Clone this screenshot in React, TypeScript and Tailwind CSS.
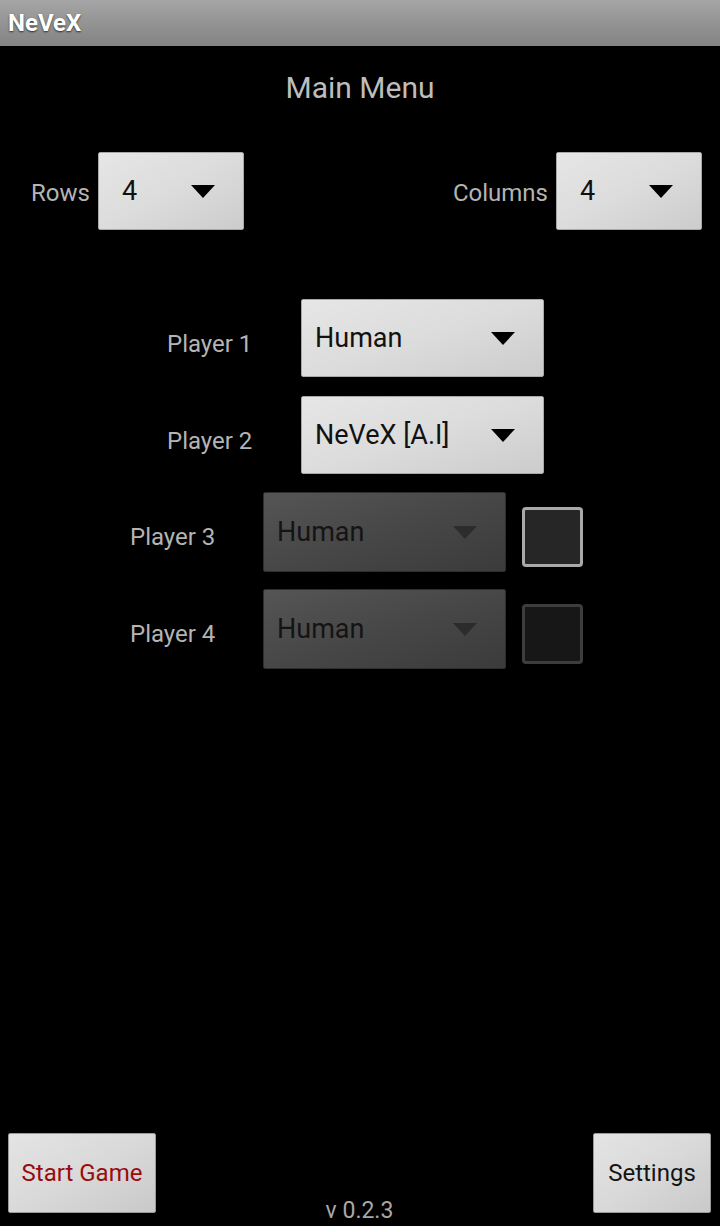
import React from 'react';

const font = "font-['Roboto','Liberation_Sans',sans-serif]";

function Arrow({ dark = false }: { dark?: boolean }) {
  return (
    <svg width="24" height="13" viewBox="0 0 24 13" className="shrink-0">
      <path d="M0 0 L24 0 L12 13 Z" fill={dark ? '#2c2c2c' : '#000'} />
    </svg>
  );
}

function Spinner({
  value,
  width,
  height = 78,
  padLeft = 13,
  padRight = 28,
  disabled = false,
}: {
  value: string;
  width: number;
  height?: number;
  padLeft?: number;
  padRight?: number;
  disabled?: boolean;
}) {
  const base = disabled
    ? 'bg-gradient-to-br from-[#555555] via-[#474747] to-[#3b3b3b] border border-[#2e2e2e] text-[#141414]'
    : 'bg-gradient-to-br from-[#e6e6e6] via-[#dcdcdc] to-[#cccccc] border border-[#a8a8a8] text-[#111111]';
  return (
    <div
      className={`${base} rounded-[2px] flex items-center justify-between shrink-0 text-[27px]`}
      style={{ width, height, paddingLeft: padLeft, paddingRight: padRight }}
    >
      <span className="leading-none">{value}</span>
      <Arrow dark={disabled} />
    </div>
  );
}

function Checkbox({ active }: { active: boolean }) {
  return (
    <div
      className={
        active
          ? 'w-[61px] h-[60px] rounded-[4px] border-[3px] border-[#a9a9a9] bg-[#262626]'
          : 'w-[61px] h-[60px] rounded-[4px] border-[3px] border-[#3d3d3d] bg-[#171717]'
      }
    />
  );
}

function Button({ label, red = false, width }: { label: string; red?: boolean; width: number }) {
  return (
    <div
      className={`h-[80px] rounded-[2px] border border-[#9a9a9a] bg-gradient-to-br from-[#e4e4e4] via-[#d9d9d9] to-[#c9c9c9] flex items-center justify-center text-[24px] ${
        red ? 'text-[#9a0b0b]' : 'text-[#141414]'
      }`}
      style={{ width }}
    >
      {label}
    </div>
  );
}

export default function App() {
  return (
    <div className={`w-[720px] h-[1226px] bg-black flex flex-col ${font}`}>
      <header className="h-[46px] shrink-0 bg-gradient-to-b from-[#a5a5a5] to-[#838383] flex items-center pl-[8px]">
        <span className="text-white font-bold text-[24px] [text-shadow:0_1px_2px_rgba(0,0,0,0.7)]">
          NeVeX
        </span>
      </header>

      <h1 className="mt-[24px] h-[36px] leading-[36px] text-center text-[30px] text-[#bdbdbd]">
        Main Menu
      </h1>

      <div className="mt-[46px] flex items-center justify-between pl-[31px] pr-[18px] text-[24px] text-[#b4b4b4]">
        <div className="flex items-center gap-[8px]">
          <span className="mt-[4px]">Rows</span>
          <Spinner value="4" width={146} padLeft={23} padRight={28} />
        </div>
        <div className="flex items-center gap-[8px]">
          <span className="mt-[4px]">Columns</span>
          <Spinner value="4" width={146} padLeft={23} padRight={28} />
        </div>
      </div>

      <div className="mt-[69px] flex flex-col text-[24px] text-[#b4b4b4]">
        <div className="flex items-center pl-[167px]">
          <span className="w-[134px] mt-[12px]">Player 1</span>
          <Spinner value="Human" width={243} />
        </div>
        <div className="mt-[19px] flex items-center pl-[167px]">
          <span className="w-[134px] mt-[12px]">Player 2</span>
          <Spinner value="NeVeX [A.I]" width={243} />
        </div>
        <div className="mt-[18px] flex items-center pl-[130px]">
          <span className="w-[133px] mt-[10px]">Player 3</span>
          <Spinner value="Human" width={243} height={80} disabled />
          <div className="ml-[16px] mt-[10px]">
            <Checkbox active />
          </div>
        </div>
        <div className="mt-[17px] flex items-center pl-[130px]">
          <span className="w-[133px] mt-[10px]">Player 4</span>
          <Spinner value="Human" width={243} height={80} disabled />
          <div className="ml-[16px] mt-[10px]">
            <Checkbox active={false} />
          </div>
        </div>
      </div>

      <div className="flex-1" />

      <div className="grid grid-cols-[1fr_auto_1fr] items-end pl-[8px] pr-[9px]">
        <div className="mb-[13px] justify-self-start">
          <Button label="Start Game" red width={148} />
        </div>
        <span className="mb-[2px] text-[23px] leading-[26px] text-[#a8a8a8]">v 0.2.3</span>
        <div className="mb-[13px] justify-self-end">
          <Button label="Settings" width={118} />
        </div>
      </div>
    </div>
  );
}
